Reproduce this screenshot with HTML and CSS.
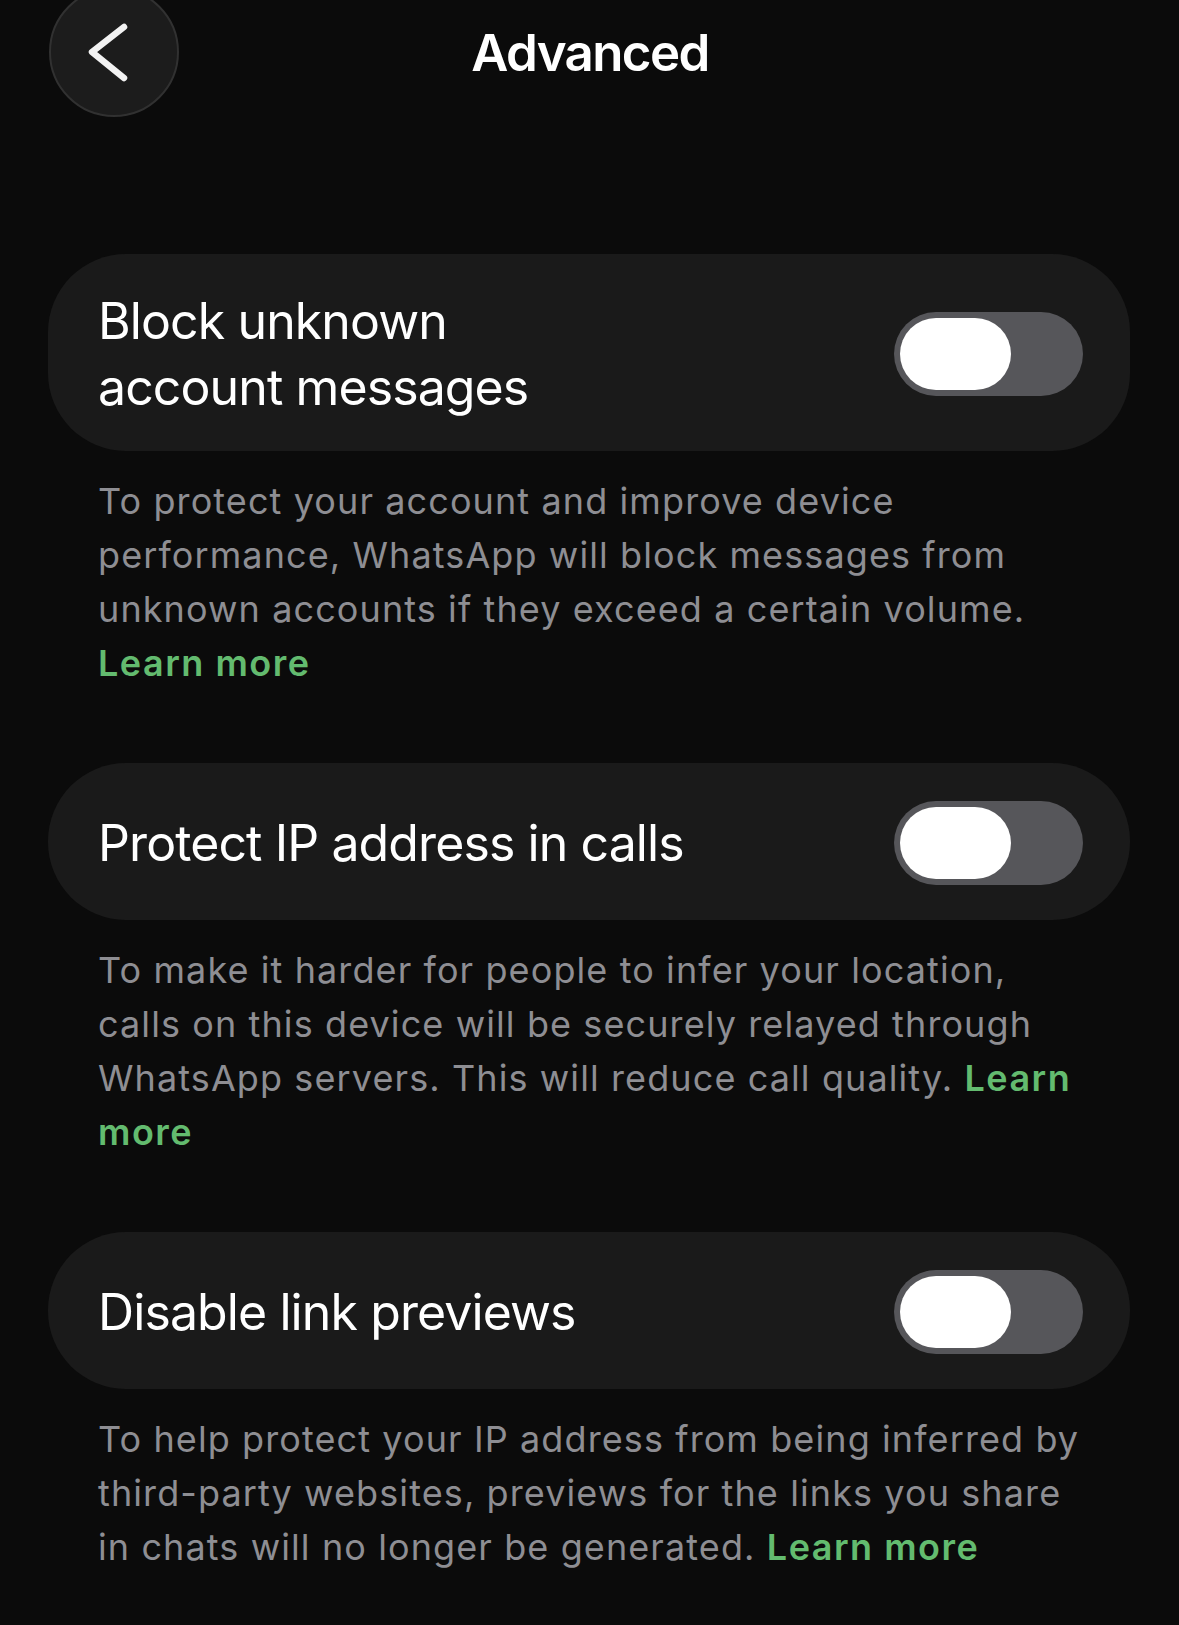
FILE: index.html
```html
<!DOCTYPE html>
<html lang="en">
<head>
<meta charset="utf-8">
<title>Advanced</title>
<link rel="stylesheet" href="styles.css">
</head>
<body>
<header class="topbar">
  <button class="back-btn" aria-label="Back">
    <svg class="chevron" width="130" height="130" viewBox="0 0 130 130">
      <polyline points="75,40 43,65 75,91" fill="none" stroke="#f2f2f2" stroke-width="6.5" stroke-linecap="round" stroke-linejoin="round"/>
    </svg>
  </button>
  <h1 class="title">Advanced</h1>
  <span class="spacer"></span>
</header>

<main class="settings">
  <section class="setting">
    <div class="setting-card">
      <span class="setting-label">Block unknown<br>account messages</span>
      <span class="switch"><span class="knob"></span></span>
    </div>
    <p class="setting-desc">To protect your account and improve device performance, WhatsApp will block messages from unknown accounts if they exceed a certain volume. <a class="learn" href="#">Learn more</a></p>
  </section>

  <section class="setting">
    <div class="setting-card">
      <span class="setting-label">Protect IP address in calls</span>
      <span class="switch"><span class="knob"></span></span>
    </div>
    <p class="setting-desc">To make it harder for people to infer your location, calls on this device will be securely relayed through WhatsApp servers. This will reduce call quality. <a class="learn" href="#">Learn more</a></p>
  </section>

  <section class="setting">
    <div class="setting-card">
      <span class="setting-label">Disable link previews</span>
      <span class="switch"><span class="knob"></span></span>
    </div>
    <p class="setting-desc">To help protect your IP address from being inferred by third-party websites, previews for the links you share in chats will no longer be generated. <a class="learn" href="#">Learn more</a></p>
  </section>
</main>
</body>
</html>
```
FILE: styles.css
```css
* {
  box-sizing: border-box;
}

html, body {
  margin: 0;
  padding: 0;
  background: #0b0b0b;
}

body {
  font-family: Inter, "Noto Sans", "Liberation Sans", sans-serif;
  color: #ffffff;
  overflow: hidden;
}

/* Top navigation bar */
.topbar {
  display: grid;
  grid-template-columns: 1fr auto 1fr;
  align-items: start;
  height: 130px;
  margin-top: -13px;
  padding: 0 48px 0 49px;
}

.back-btn {
  width: 130px;
  height: 130px;
  padding: 0;
  border-radius: 50%;
  background: #1c1c1c;
  border: 2px solid #313131;
  display: flex;
  align-items: center;
  justify-content: center;
  cursor: pointer;
}

.chevron {
  display: block;
  margin: -2px;
}

.title {
  margin: 0;
  padding-top: 34px;
  font-size: 51px;
  line-height: 64px;
  font-weight: 600;
  letter-spacing: -1.6px;
  text-align: center;
}

/* Settings list */
.settings {
  display: flex;
  flex-direction: column;
  padding: 0 49px 0 48px;
  margin-top: 137px;
}

.setting + .setting {
  margin-top: 73px;
}

.setting-card {
  display: flex;
  align-items: center;
  justify-content: space-between;
  min-height: 157px;
  padding: 34px 47px 31px 50px;
  background: #1a1a1a;
  border-radius: 78px;
}

.setting-label {
  font-size: 50px;
  line-height: 66px;
  font-weight: 400;
  letter-spacing: -0.9px;
}

/* Toggle switch, off state */
.switch {
  flex: none;
  width: 189px;
  height: 84px;
  padding: 6px;
  border-radius: 42px;
  background: #56565a;
  display: flex;
}

.knob {
  width: 111px;
  height: 72px;
  border-radius: 36px;
  background: #ffffff;
}

.setting-desc {
  margin: 23px 0 0;
  padding: 0 40px 0 50px;
  font-size: 36px;
  line-height: 54px;
  color: #8e8e93;
  letter-spacing: 1.1px;
}

.learn {
  color: #63bb6f;
  font-weight: 600;
  letter-spacing: 1.5px;
  text-decoration: none;
}
```
